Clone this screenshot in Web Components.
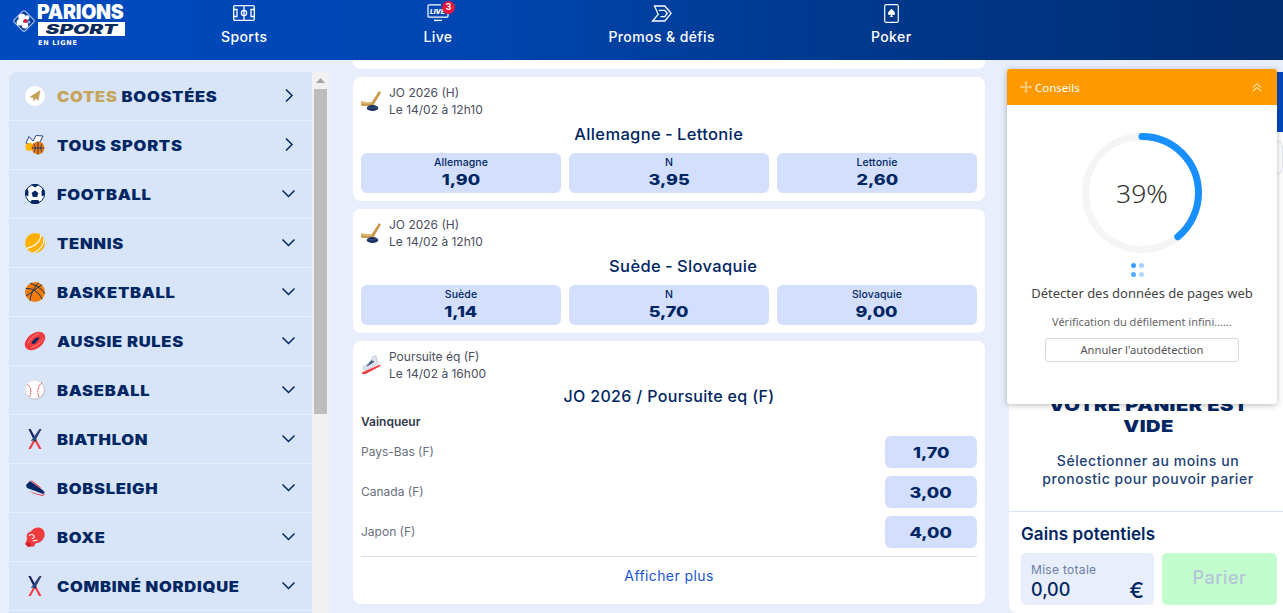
<!DOCTYPE html>
<html lang="fr">
<head>
<meta charset="utf-8">
<title>Parions Sport</title>
<style>
  html, body { margin: 0; height: 613px; overflow: hidden; background: #e8eefb; }
  body { font-family: "Inter", "Liberation Sans", sans-serif; color: #002663; }
</style>
</head>
<body>
<ps-app>
  <ps-header slot="header"></ps-header>
  <ps-sidebar slot="left">
    <ps-sport icon="boost" arrow="right"><span style="color:#c6a45c">COTES</span> BOOSTÉES</ps-sport>
    <ps-sport icon="all" arrow="right">TOUS SPORTS</ps-sport>
    <ps-sport icon="football">FOOTBALL</ps-sport>
    <ps-sport icon="tennis">TENNIS</ps-sport>
    <ps-sport icon="basket">BASKETBALL</ps-sport>
    <ps-sport icon="aussie">AUSSIE RULES</ps-sport>
    <ps-sport icon="baseball">BASEBALL</ps-sport>
    <ps-sport icon="skis">BIATHLON</ps-sport>
    <ps-sport icon="bob">BOBSLEIGH</ps-sport>
    <ps-sport icon="boxe">BOXE</ps-sport>
    <ps-sport icon="skis">COMBINÉ NORDIQUE</ps-sport>
  </ps-sidebar>
  <div slot="center">
    <ps-card stub></ps-card>
    <ps-card icon="hockey" comp="JO 2026 (H)" date="Le 14/02 à 12h10" home="Allemagne" away="Lettonie">
      <ps-odds-row>
        <ps-odd label="Allemagne" value="1,90"></ps-odd>
        <ps-odd label="N" value="3,95"></ps-odd>
        <ps-odd label="Lettonie" value="2,60"></ps-odd>
      </ps-odds-row>
    </ps-card>
    <ps-card icon="hockey" comp="JO 2026 (H)" date="Le 14/02 à 12h10" home="Suède" away="Slovaquie">
      <ps-odds-row>
        <ps-odd label="Suède" value="1,14"></ps-odd>
        <ps-odd label="N" value="5,70"></ps-odd>
        <ps-odd label="Slovaquie" value="9,00"></ps-odd>
      </ps-odds-row>
    </ps-card>
    <ps-card icon="skate" comp="Poursuite éq (F)" date="Le 14/02 à 16h00" title="JO 2026 / Poursuite eq (F)">
      <ps-market name="Vainqueur">
        <ps-runner name="Pays-Bas (F)" value="1,70"></ps-runner>
        <ps-runner name="Canada (F)" value="3,00"></ps-runner>
        <ps-runner name="Japon (F)" value="4,00"></ps-runner>
      </ps-market>
    </ps-card>
  </div>
  <ps-basket slot="right"></ps-basket>
  <ps-tips slot="overlay"></ps-tips>
</ps-app>

<script>
(function () {
  "use strict";

  const NAVY = "#002663";

  // icones des sports, viewBox 20x20
  const ICONS = {
    boost: `<circle cx="10" cy="10" r="10" fill="#fff"/><path d="M15.500 4 13.300 15 10.800 12.600 9 15.400 7.900 12 4.500 11Z" fill="#c6a45c"/>`,
    all: `<path d="M1 8 4 1.500 8 6 11 .5 18 1 15 7 9 11Z" fill="#fff" stroke="#24477f" stroke-width="1"/><circle cx="4.500" cy="12" r="4" fill="#ffb400"/><circle cx="13" cy="13" r="6.400" fill="#f07c14"/><path d="M6.800 13h12.400M13 6.600v12.800M8.600 8.600c2.200 2.600 2.200 6.200 0 8.800M17.400 8.600c-2.200 2.600-2.200 6.200 0 8.800" stroke="#17305f" stroke-width=".9" fill="none"/>`,
    football: `<circle cx="10" cy="10" r="9.500" fill="#fff" stroke="${NAVY}"/><path d="M10 6.500 13.400 9 12.100 13H7.900L6.600 9ZM10 0a10 10 0 0 0-4 .8L10 3.400 14 .8A10 10 0 0 0 10 0ZM1.800 4.300A10 10 0 0 0 0 10l.1 1 3.200 1.300L3.500 7.200ZM18.200 4.300 16.500 7.200 16.700 12.300 19.900 11 20 10A10 10 0 0 0 18.200 4.300ZM5.200 18.800A10 10 0 0 0 10 20a10 10 0 0 0 4.800-1.200L13.400 16H6.600Z" fill="${NAVY}"/>`,
    tennis: `<circle cx="10" cy="10" r="10" fill="#ffb000"/><path d="M15.800 1.800C16 7 12 13 1.600 15.400M19 6C19.400 11 15 17 9 19.800" fill="none" stroke="#fff" stroke-width="1.100"/>`,
    basket: `<circle cx="10" cy="10" r="10" fill="#f07c0c"/><path d="M.8 6.500C6 6 14 9 17 17.300M5 1.400C11 3 17 7 19.800 11.500M13.500.7C9 6 5 13 5.200 18.800M1 14C6 11 12 6 16.800 2.700" fill="none" stroke="#17305f" stroke-width="1"/>`,
    aussie: `<g transform="rotate(-38 10 10)"><ellipse cx="10" cy="10" rx="11.500" ry="7.600" fill="#ef3b3f"/><path d="M3 7.500C8 5 14 5 18 7M3 13c5 2 11 2 15 0" fill="none" stroke="#ff8f8f" stroke-width=".8"/></g><path d="M6.500 12.500C8 8.500 11 6 14.500 6.500 13.800 9 12 10 10.800 10.400L11.500 11.200C9.800 12.600 8 13.200 6.500 12.500Z" fill="${NAVY}"/>`,
    baseball: `<circle cx="10" cy="10" r="10" fill="#c9c9c9"/><circle cx="9.600" cy="9.400" r="9.200" fill="#fff"/><path d="M2.500 4.500C6 7 6.800 12 4.500 16.800M17 2.800C13 6 11.500 11 14 17" fill="none" stroke="#ef3b3f" stroke-width="1" stroke-dasharray="1.600 .7"/>`,
    skis: `<path d="M3.500 0 5.500 0 16.500 20 14 20Z" fill="#ef3b3f"/><path d="M14.500 0 16.500 0 5.800 20 3.400 20Z" fill="#ef3b3f"/><path d="M3.500 0 5.500 0 11.500 11 9.800 13Z" fill="${NAVY}"/><path d="M14.500 0 16.500 0 10.500 11 5.800 12 Z" fill="#24477f"/>`,
    bob: `<path d="M1 7 5 3 17 11.500 19.800 14.500 18 16 9 12.500 2 10Z" fill="${NAVY}"/><path d="M5 2 8 3.200 16.500 10 14 9.400ZM3 12.500 11 15.500 17.500 17 19.500 15.600 19.600 16.800 17.500 18 10 16Z" fill="#ef3b3f"/>`,
    boxe: `<path d="M2 12.500C1 7 3 5 6 4.600 8 1 12 0 15 .8 19 2 20.400 6 19.400 9.600 18 14 14.500 16 10.500 16.400L9 19.400 3 20 0 17Z" fill="#ef3b3f"/><path d="M4 8.500c2-1.500 4-1.400 5 .4.7 1.600-.6 3-2.300 2.400M7.500 14l5-.8" fill="none" stroke="#fff" stroke-width="1.100"/><path d="M.6 17 3.400 14.600 6.400 17.600 3.400 20Z" fill="#c92428"/>`,
    hockey: `<path d="M0 10.500 10.500 11.500 18 0 20 1.500 12 15 1 15 0 14Z" fill="#c99a4c"/><path d="M0 10.500 10.500 11.500 9.500 13 0 12.500Z" fill="#e0b974"/><ellipse cx="11.500" cy="17" rx="5.800" ry="3" fill="#17305f"/><path d="M6.500 16c3 1.200 7 1.200 10 0" fill="none" stroke="#5c7299" stroke-width=".6"/>`,
    skate: `<path d="M2 12 9 7.500 12 1.500 15 1 15.600 5 17.400 8 6.500 15 3 15Z" fill="#dfe5ef" stroke="#a9b3c4" stroke-width=".6"/><path d="M6 11 13 6.200M8 9 11 5.500" stroke="#4a5f85" stroke-width="1.400"/><path d="M1 17.500 19 9.500 19.600 11 4.500 19H1Z" fill="#ef3b3f"/>`
  };

  class PsApp extends HTMLElement {
    constructor() {
      super();
      this.attachShadow({ mode: "open" });
      this.shadowRoot.innerHTML = `
        <style>
          :host { display: block; position: relative; width: 1283px; height: 613px; overflow: hidden; }
          .main {
            display: grid;
            grid-template-columns: 320px 632px 274px;
            column-gap: 24px;
            padding-left: 9px;
            height: 553px;
            overflow: hidden;
          }
          .col-left { padding-top: 12px; }
          .col-right { padding-top: 12px; }
        </style>
        <slot name="header"></slot>
        <div class="main">
          <div class="col-left"><slot name="left"></slot></div>
          <div class="col-center"><slot name="center"></slot></div>
          <div class="col-right"><slot name="right"></slot></div>
        </div>
        <slot name="overlay"></slot>
      `;
    }
  }

  class PsHeader extends HTMLElement {
    constructor() {
      super();
      this.attachShadow({ mode: "open" });
      this.shadowRoot.innerHTML = `
        <style>
          :host {
            display: flex;
            height: 60px;
            background: linear-gradient(90deg, #004abf 0%, #0046b2 35%, #003b93 60%, #002c70 100%);
            color: #fff;
          }
          .logo { width: 221px; flex: none; position: relative; height: 60px; }
          .clover { position: absolute; left: 12px; top: 9px; }
          .brand { position: absolute; left: 37px; top: 3px; width: 88px; }
          .parions {
            font: 900 19.500px/18px "Inter", sans-serif;
            letter-spacing: -.25px;
            color: #fff;
            white-space: nowrap;
          }
          .sport {
            display: flex; align-items: center; justify-content: center;
            background: #fff;
            color: #0a2a5e;
            height: 14px;
            margin: 1px 0 0 1px;
          }
          .sport b {
            font: italic 900 13px/14px "Inter", sans-serif;
            transform: scaleX(1.600);
          }
          .ligne { font: 800 6.500px/8px "DejaVu Sans", sans-serif; letter-spacing: .7px; margin: 3px 0 0 1px; }
          nav { display: flex; gap: 156px; }
          .item { display: flex; flex-direction: column; align-items: center; position: relative; }
          .ic { height: 22px; margin-top: 2px; display: flex; align-items: center; }
          .lb { font: 500 14px/18px "Inter", sans-serif; letter-spacing: .4px; margin-top: 4px; white-space: nowrap; }
          .badge {
            position: absolute; left: 50%; top: 1px; margin-left: 4px;
            width: 13px; height: 13px; border-radius: 50%;
            background: #e6173a; color: #fff;
            font: 700 8.500px/13px "Inter", sans-serif; text-align: center;
          }
          .live-t { font: italic 900 6.500px "Inter", sans-serif; fill: #fff; }
        </style>
        <div class="logo">
          <svg class="clover" width="24" height="24" viewBox="0 0 24 24">
            <rect x="4.200" y="4.200" width="15.600" height="15.600" rx="2" transform="rotate(45 12 12)" fill="#0a3f99" stroke="#a8c4ee" stroke-width="1.200"/>
            <g fill="#fff">
              <circle cx="10" cy="8.400" r="3.600"/><circle cx="15" cy="8.600" r="2.400"/>
              <circle cx="7.800" cy="13.400" r="3.200"/><circle cx="13" cy="16.200" r="3.200"/>
            </g>
            <circle cx="16.800" cy="13" r="1.600" fill="#8fb4ea"/>
            <circle cx="13.400" cy="12" r="2" fill="#e6173a"/>
          </svg>
          <div class="brand">
            <div class="parions">PARIONS</div>
            <div class="sport"><b>SPORT</b></div>
            <div class="ligne">EN LIGNE</div>
          </div>
        </div>
        <nav>
          <div class="item">
            <div class="ic">
              <svg width="22" height="16" viewBox="0 0 22 16" fill="none" stroke="#fff" stroke-width="1.300">
                <rect x=".7" y=".7" width="20.600" height="14.600" rx="1.200"/>
                <path d="M11 .7v14.600"/><circle cx="11" cy="8" r="2.600"/>
                <path d="M.7 4.500H4v7H.7M21.300 4.500H18v7h3.300"/>
              </svg>
            </div>
            <div class="lb">Sports</div>
          </div>
          <div class="item">
            <div class="ic">
              <svg width="22" height="18" viewBox="0 0 22 18" fill="none" stroke="#fff" stroke-width="1.200">
                <path d="M14 .9H2.200A1.200 1.200 0 0 0 1 2.100V12a1.200 1.200 0 0 0 1.200 1.200h17.600A1.200 1.200 0 0 0 21 12V7"/>
                <path d="M7 16.400h8" stroke-width="1.400"/>
                <text class="live-t" x="3" y="10" stroke="none">LIVE</text>
              </svg>
            </div>
            <span class="badge">3</span>
            <div class="lb">Live</div>
          </div>
          <div class="item">
            <div class="ic">
              <svg width="21" height="17" viewBox="0 0 20 17" fill="none" stroke="#fff" stroke-width="1.300" stroke-linejoin="miter">
                <path d="M3 1H13.300L19.600 8.300 13.300 16H1L6.700 9.300Z"/>
                <path d="M7.300 5.300H13.300L15.700 8.300 13.300 11.700H9"/>
              </svg>
            </div>
            <div class="lb">Promos &amp; défis</div>
          </div>
          <div class="item">
            <div class="ic">
              <svg width="15" height="19" viewBox="0 0 15 19">
                <rect x=".7" y=".7" width="13.600" height="17.600" rx="1.600" fill="none" stroke="#fff" stroke-width="1.200"/>
                <path d="M7.500 4.800C9.200 6.600 11 7.800 11 9.600c0 1.600-2 2-3 .9.100 1 .4 1.700 1 2.400H6c.6-.7.9-1.400 1-2.400-1 1.100-3 .7-3-.9 0-1.800 1.800-3 3.500-4.800Z" fill="#fff"/>
              </svg>
            </div>
            <div class="lb">Poker</div>
          </div>
        </nav>
      `;
    }
  }

  class PsSidebar extends HTMLElement {
    constructor() {
      super();
      this.attachShadow({ mode: "open" });
      this.shadowRoot.innerHTML = `
        <style>
          :host { display: flex; height: 541px; width: 320px; }
          .list {
            width: 303px; flex: none;
            background: #d8e5f8;
            border-radius: 8px 0 0 0;
            overflow: hidden;
          }
          .bar { width: 17px; flex: none; background: #f1f1f1; display: flex; flex-direction: column; align-items: center; }
          .up { height: 17px; display: flex; align-items: center; justify-content: center; }
          .thumb { width: 13px; height: 325px; background: #bdbdbd; }
        </style>
        <div class="list"><slot></slot></div>
        <div class="bar">
          <div class="up">
            <svg width="9" height="5" viewBox="0 0 9 5"><path d="M4.500 0 9 5H0Z" fill="#a3a3a3"/></svg>
          </div>
          <div class="thumb"></div>
        </div>
      `;
    }
  }

  class PsSport extends HTMLElement {
    constructor() {
      super();
      this.attachShadow({ mode: "open" });
      const chevron = this.getAttribute("arrow") === "right"
        ? `<path d="M5 1.500 11 7.500 5 13.500"/>`
        : `<path d="M1.500 4.500 7.500 10.500 13.500 4.500"/>`;
      this.shadowRoot.innerHTML = `
        <style>
          :host {
            display: flex;
            align-items: center;
            box-sizing: border-box;
            height: 49px;
            padding: 0 16px 1px 16px;
            border-bottom: 1px solid #e6effc;
            color: ${NAVY};
          }
          .ic { width: 20px; height: 20px; flex: none; overflow: visible; }
          .name { flex: 1; margin-left: 12px; min-width: 0; }
          .name b {
            display: inline-block;
            font: 900 14px/18px "Inter", sans-serif;
            letter-spacing: .6px;
            white-space: nowrap;
            transform: scaleX(1.180);
            transform-origin: left center;
          }
          .chev { width: 15px; height: 15px; flex: none; fill: none; stroke: ${NAVY}; stroke-width: 1.500; }
        </style>
        <svg class="ic" viewBox="0 0 20 20">${ICONS[this.getAttribute("icon")]}</svg>
        <span class="name"><b><slot></slot></b></span>
        <svg class="chev" viewBox="0 0 15 15">${chevron}</svg>
      `;
    }
  }

  class PsCard extends HTMLElement {
    constructor() {
      super();
      this.attachShadow({ mode: "open" });
      const stub = this.hasAttribute("stub");
      // le tiret des matchs reste au centre de la carte
      const match = this.hasAttribute("home");
      const title = match
        ? `<span class="h">${this.getAttribute("home")}</span><span class="d">-</span><span class="a">${this.getAttribute("away")}</span>`
        : this.getAttribute("title");
      const head = stub ? "" : `
        <div class="head">
          <svg class="ic" viewBox="0 0 20 20">${ICONS[this.getAttribute("icon")]}</svg>
          <div>
            <div>${this.getAttribute("comp")}</div>
            <div>${this.getAttribute("date")}</div>
          </div>
        </div>
        <div class="title ${match ? "" : "plain"}">${title}</div>
      `;
      this.shadowRoot.innerHTML = `
        <style>
          :host {
            display: block;
            background: #fff;
            border-radius: 8px;
            padding: 8px;
            margin-bottom: 8px;
            color: ${NAVY};
          }
          :host([stub]) { height: 9px; padding: 0; border-radius: 0 0 8px 8px; }
          .head { display: flex; align-items: center; gap: 8px; margin-top: -1px; font: 400 12px/17px "Inter", sans-serif; color: #4a4e5e; }
          .ic { width: 20px; height: 20px; flex: none; }
          .title {
            display: flex; justify-content: center; gap: 4px;
            font: 550 16.500px/20px "Inter", sans-serif;
            letter-spacing: .35px;
            margin: 6px 0 0;
          }
          .title.plain { font-size: 16px; margin-top: 4px; }
          .h { flex: 1; text-align: right; }
          .a { flex: 1; text-align: left; }
        </style>
        ${head}
        <slot></slot>
      `;
    }
  }

  class PsOddsRow extends HTMLElement {
    constructor() {
      super();
      this.attachShadow({ mode: "open" });
      this.shadowRoot.innerHTML = `
        <style>
          :host { display: grid; grid-template-columns: repeat(3, 200px); gap: 8px; margin-top: 9px; }
        </style>
        <slot></slot>
      `;
    }
  }

  class PsOdd extends HTMLElement {
    constructor() {
      super();
      this.attachShadow({ mode: "open" });
      this.shadowRoot.innerHTML = `
        <style>
          :host {
            display: flex; flex-direction: column; align-items: center; justify-content: center;
            height: 40px;
            background: #d3dffc;
            border-radius: 6px;
            color: ${NAVY};
          }
          .l { font: 500 10.500px/13px "Inter", sans-serif; letter-spacing: .1px; margin-top: -2px; }
          .v {
            font: 800 15px/17px "Inter", sans-serif;
            margin-top: 2px;
            transform: scaleX(1.200);
          }
        </style>
        <span class="l">${this.getAttribute("label")}</span>
        <span class="v">${this.getAttribute("value")}</span>
      `;
    }
  }

  class PsMarket extends HTMLElement {
    constructor() {
      super();
      this.attachShadow({ mode: "open" });
      this.shadowRoot.innerHTML = `
        <style>
          :host { display: block; }
          .name { font: 600 12px/18px "Inter", sans-serif; color: #333a4d; margin-top: 7px; }
          .rows { display: flex; flex-direction: column; gap: 8px; margin-top: 5px; }
          .more {
            border-top: 1px solid #d8e0ec;
            margin-top: 8px;
            height: 39px;
            font: 400 14px/37px "Inter", sans-serif;
            letter-spacing: .4px;
            color: #1a56d6;
            text-align: center;
          }
        </style>
        <div class="name">${this.getAttribute("name")}</div>
        <div class="rows"><slot></slot></div>
        <div class="more">Afficher plus</div>
      `;
    }
  }

  class PsRunner extends HTMLElement {
    constructor() {
      super();
      this.attachShadow({ mode: "open" });
      this.shadowRoot.innerHTML = `
        <style>
          :host { display: flex; align-items: center; justify-content: space-between; height: 32px; }
          .n { font: 400 12px/16px "Inter", sans-serif; color: #696f7d; }
          .v {
            width: 92px; height: 32px;
            background: #d3dffc;
            border-radius: 6px;
            display: flex; align-items: center; justify-content: center;
            color: ${NAVY};
          }
          .v b { font: 800 15px/17px "Inter", sans-serif; transform: scaleX(1.200); }
        </style>
        <span class="n">${this.getAttribute("name")}</span>
        <span class="v"><b>${this.getAttribute("value")}</b></span>
      `;
    }
  }

  class PsBasket extends HTMLElement {
    constructor() {
      super();
      this.attachShadow({ mode: "open" });
      this.shadowRoot.innerHTML = `
        <style>
          :host {
            display: flex; flex-direction: column;
            height: 541px;
            background: #fff;
            border-radius: 8px 0 0 8px;
            overflow: hidden;
            color: ${NAVY};
          }
          .tab { height: 60px; flex: none; background: #0049bd; }
          .search {
            height: 33px; flex: none;
            margin: 8px 0 0 8px;
            border: 1px solid #dde3ee;
            border-radius: 8px;
          }
          .empty { flex: 1; text-align: center; padding: 220px 0 0 4px; min-height: 0; }
          h2 {
            margin: 0 auto;
            width: 175px;
            font: 900 16.500px/21px "Inter", sans-serif;
            letter-spacing: .4px;
            transform: scaleX(1.220);
          }
          p { margin: 15px 0 0; font: 500 14px/18px "Inter", sans-serif; letter-spacing: .55px; color: #1d3f77; }
          .foot { border-top: 1px solid #d8e5f8; padding: 12px 6px 8px 12px; flex: none; }
          .gains { font: 600 17px/20px "Inter", sans-serif; letter-spacing: .1px; }
          .row { display: flex; gap: 8px; margin-top: 9px; }
          .mise {
            width: 133px; height: 52px; box-sizing: border-box;
            background: #e8eefb; border-radius: 5px;
            padding: 10px 10px 0;
          }
          .mise small { display: block; font: 400 12px/14px "Inter", sans-serif; letter-spacing: .3px; color: #6a7fa3; }
          .val { display: flex; justify-content: space-between; font: 500 18px/22px "Inter", sans-serif; margin-top: 2px; }
          .val .eur { font-size: 22px; }
          .go {
            width: 115px; height: 52px;
            background: #c3fdcd; border-radius: 5px;
            font: 500 18px/50px "Inter", sans-serif; letter-spacing: .5px; color: #b5c4da;
            text-align: center;
          }
        </style>
        <div class="tab"></div>
        <div class="search"></div>
        <div class="empty">
          <h2>VOTRE PANIER EST VIDE</h2>
          <p>Sélectionner au moins un<br>pronostic pour pouvoir parier</p>
        </div>
        <div class="foot">
          <div class="gains">Gains potentiels</div>
          <div class="row">
            <div class="mise"><small>Mise totale</small><div class="val"><span>0,00</span><span class="eur">€</span></div></div>
            <div class="go">Parier</div>
          </div>
        </div>
      `;
    }
  }

  class PsTips extends HTMLElement {
    constructor() {
      super();
      this.attachShadow({ mode: "open" });
      // anneau : 39% de la circonference
      const c = 2 * Math.PI * 56.5;
      this.shadowRoot.innerHTML = `
        <style>
          :host {
            position: absolute; left: 1007px; top: 69px;
            display: block;
            width: 270px; height: 335px;
            background: #fff;
            border-radius: 3px;
            box-shadow: 0 1px 6px rgba(0, 0, 0, .28);
            overflow: hidden;
            font-family: "Noto Sans", "Open Sans", sans-serif;
            color: #444;
          }
          .top {
            display: flex; align-items: center;
            height: 36px;
            padding: 0 15px 0 13px;
            background: #ff9900;
            color: #fff;
            font-size: 11.500px;
          }
          .top span { flex: 1; margin-left: 3px; }
          .body { display: flex; flex-direction: column; align-items: center; padding-top: 28px; }
          .ring { position: relative; width: 120px; height: 120px; }
          .pct {
            position: absolute; inset: 0;
            display: flex; align-items: center; justify-content: center;
            font: 300 26.500px "Noto Sans", sans-serif; color: #333;
          }
          .spin { margin: 10px 9px 0 0; width: 13px; height: 14px; display: grid; grid-template-columns: 5px 5px; gap: 3px; }
          .spin i { width: 5px; height: 5px; border-radius: 50%; background: #1890ff; }
          .t1 { font-size: 13px; line-height: 20px; margin-top: 6px; white-space: nowrap; color: #444; }
          .t2 { font-size: 11px; line-height: 16px; margin-top: 11px; color: #666; white-space: nowrap; }
          .btn {
            width: 194px; height: 24px; box-sizing: border-box; margin-top: 8px;
            border: 1px solid #d9d9d9; border-radius: 3px;
            font-size: 11.200px; line-height: 22px; text-align: center; color: #555;
          }
        </style>
        <div class="top">
          <svg width="12" height="12" viewBox="0 0 12 12" fill="#ffd08a">
            <path d="M6 0 8 2.200H6.800V5.200H9.800V4L12 6 9.800 8V6.800H6.800V9.800H8L6 12 4 9.800H5.200V6.800H2.200V8L0 6 2.200 4V5.200H5.200V2.200H4Z"/>
          </svg>
          <span>Conseils</span>
          <svg width="10" height="9" viewBox="0 0 10 9" fill="none" stroke="#fff" stroke-width="1">
            <path d="M.8 4.500 5 .8 9.200 4.500M.8 8.200 5 4.500 9.200 8.200"/>
          </svg>
        </div>
        <div class="body">
          <div class="ring">
            <svg width="120" height="120" viewBox="0 0 120 120" fill="none" stroke-width="7">
              <circle cx="60" cy="60" r="56.500" stroke="#f5f5f5"/>
              <circle cx="60" cy="60" r="56.500" stroke="#1890ff" stroke-linecap="round"
                stroke-dasharray="${0.39 * c} ${c}" transform="rotate(-90 60 60)"/>
            </svg>
            <div class="pct">39%</div>
          </div>
          <div class="spin">
            <i style="opacity:.85"></i><i style="opacity:.4"></i>
            <i style="opacity:.75"></i><i style="opacity:.35"></i>
          </div>
          <div class="t1">Détecter des données de pages web</div>
          <div class="t2">Vérification du défilement infini......</div>
          <div class="btn">Annuler l'autodétection</div>
        </div>
      `;
    }
  }

  customElements.define("ps-app", PsApp);
  customElements.define("ps-header", PsHeader);
  customElements.define("ps-sidebar", PsSidebar);
  customElements.define("ps-sport", PsSport);
  customElements.define("ps-card", PsCard);
  customElements.define("ps-odds-row", PsOddsRow);
  customElements.define("ps-odd", PsOdd);
  customElements.define("ps-market", PsMarket);
  customElements.define("ps-runner", PsRunner);
  customElements.define("ps-basket", PsBasket);
  customElements.define("ps-tips", PsTips);
})();
</script>
</body>
</html>
